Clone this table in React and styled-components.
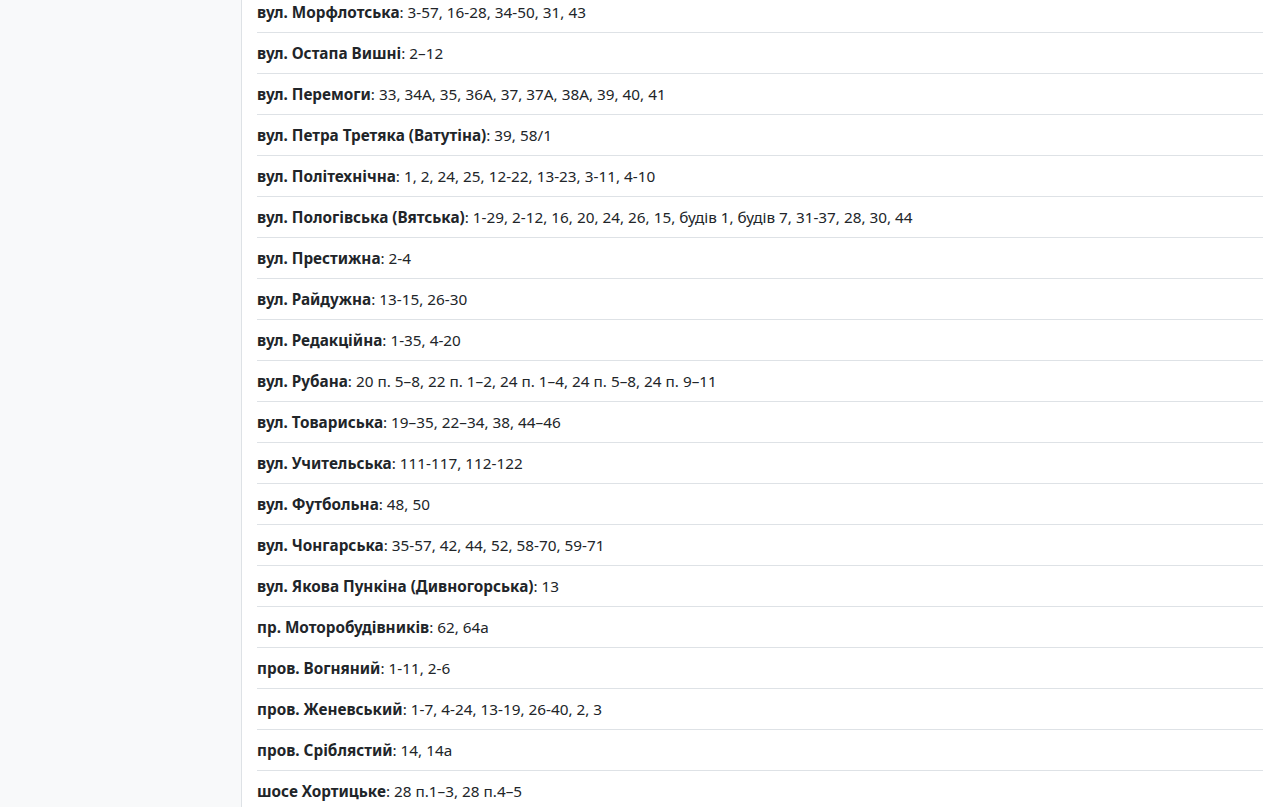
import React from 'react'
import styled, { createGlobalStyle } from 'styled-components'

const GlobalStyle = createGlobalStyle`
  html, body {
    margin: 0;
    padding: 0;
    background: #fff;
    overflow: hidden;
  }
  body {
    font-family: "Noto Sans", "Open Sans", sans-serif;
    font-size: 15.3px;
    color: #212529;
  }
`

const streets = [
  ['вул. Морфлотська', '3-57, 16-28, 34-50, 31, 43'],
  ['вул. Остапа Вишні', '2–12'],
  ['вул. Перемоги', '33, 34А, 35, 36А, 37, 37А, 38А, 39, 40, 41'],
  ['вул. Петра Третяка (Ватутіна)', '39, 58/1'],
  ['вул. Політехнічна', '1, 2, 24, 25, 12-22, 13-23, 3-11, 4-10'],
  ['вул. Пологівська (Вятська)', '1-29, 2-12, 16, 20, 24, 26, 15, будів 1, будів 7, 31-37, 28, 30, 44'],
  ['вул. Престижна', '2-4'],
  ['вул. Райдужна', '13-15, 26-30'],
  ['вул. Редакційна', '1-35, 4-20'],
  ['вул. Рубана', '20 п. 5–8, 22 п. 1–2, 24 п. 1–4, 24 п. 5–8, 24 п. 9–11'],
  ['вул. Товариська', '19–35, 22–34, 38, 44–46'],
  ['вул. Учительська', '111-117, 112-122'],
  ['вул. Футбольна', '48, 50'],
  ['вул. Чонгарська', '35-57, 42, 44, 52, 58-70, 59-71'],
  ['вул. Якова Пункіна (Дивногорська)', '13'],
  ['пр. Моторобудівників', '62, 64а'],
  ['пров. Вогняний', '1-11, 2-6'],
  ['пров. Женевський', '1-7, 4-24, 13-19, 26-40, 2, 3'],
  ['пров. Сріблястий', '14, 14а'],
  ['шосе Хортицьке', '28 п.1–3, 28 п.4–5'],
]

export default function App() {
  return (
    <>
      <GlobalStyle />
      <Layout>
        <Sidebar />
        <Main>
          <List>
            {streets.map(([name, houses]) => (
              <Item key={name}>
                <b>{name}</b>: {houses}
              </Item>
            ))}
          </List>
        </Main>
      </Layout>
    </>
  )
}

const Layout = styled.div`
  display: flex;
  height: 807px;
`

const Sidebar = styled.aside`
  width: 241px;
  flex: none;
  background: #f8f9fa;
  border-right: 1px solid #dee2e6;
`

const Main = styled.main`
  flex: 1;
  padding-left: 15px;
  overflow: hidden;
`

const List = styled.ul`
  list-style: none;
  margin: -8px 0 0;
  padding: 0;
`

const Item = styled.li`
  padding: 10px 0;
  line-height: 20px;
  border-bottom: 1px solid #dee2e6;
  white-space: nowrap;

  b {
    font-weight: 700;
  }
`
